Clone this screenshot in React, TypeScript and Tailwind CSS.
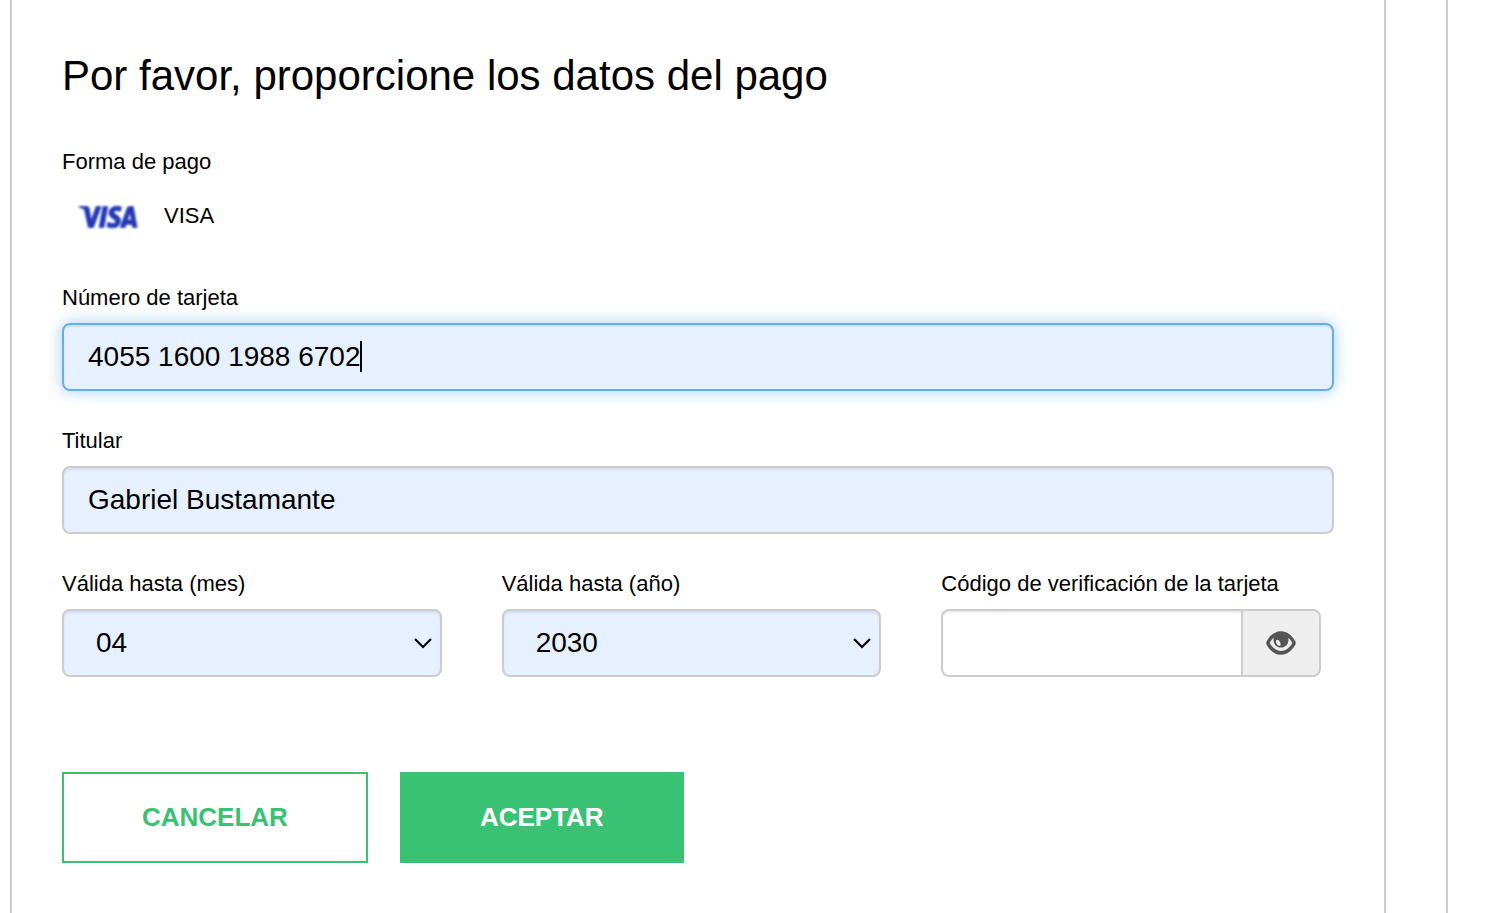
import { useState } from "react";
import type { ReactNode } from "react";
import { SiVisa } from "react-icons/si";

const field =
  "h-[68px] w-full rounded-lg border-2 text-[28px] text-black outline-none appearance-none";
const shade = "border-[#ccc] shadow-[inset_0_2px_2px_rgba(0,0,0,0.075)]";

function Field({ id, label, children }: { id: string; label: string; children: ReactNode }) {
  return (
    <div className="flex flex-col gap-[9px]">
      <label htmlFor={id} className="text-[22px] leading-8">
        {label}
      </label>
      {children}
    </div>
  );
}

function Select({ id, options, initial }: { id: string; options: string[]; initial: string }) {
  return (
    <div className="relative">
      <select id={id} defaultValue={initial} className={`${field} ${shade} bg-[#e6f0ff] px-8`}>
        {options.map((o) => (
          <option key={o}>{o}</option>
        ))}
      </select>
      <svg
        viewBox="0 0 20 12"
        className="pointer-events-none absolute top-7 right-[9px] h-3 w-5"
        fill="none"
        stroke="#000"
        strokeWidth="2.2"
        aria-hidden="true"
      >
        <path d="M2 2 L10 10 L18 2" />
      </svg>
    </div>
  );
}

function Eye() {
  return (
    <svg viewBox="0 0 30 24" className="h-6 w-[30px]" aria-hidden="true">
      <path
        fill="#555"
        d="M15 0.2C21 0.2 26 4.200 29.300 10.200Q30.300 12 29.300 13.800C26 19.800 21 23.800 15 23.800S4 19.800 0.700 13.800Q-0.300 12 0.700 10.200C4 4.200 9 0.200 15 0.200Z"
      />
      <path
        fill="#eee"
        d="M7.700 6.800C6 8.200 4.900 9.800 3.700 12C6.300 16.800 10.200 19.900 15 19.900S23.700 16.800 26.300 12C25.100 9.800 24 8.200 22.300 6.800C23.300 12.400 20 16.600 15 16.600S6.700 12.400 7.700 6.800Z"
      />
      <ellipse cx="12.300" cy="11.800" rx="1.900" ry="3.200" fill="#eee" transform="rotate(-28 12.300 11.800)" />
    </svg>
  );
}

const months = ["01", "02", "03", "04", "05", "06", "07", "08", "09", "10", "11", "12"];
const years = ["2025", "2026", "2027", "2028", "2029", "2030", "2031", "2032"];

export default function App() {
  const [visible, setVisible] = useState(false);
  return (
    <div className="mr-[52px] min-h-screen border-r-2 border-[#ccc] bg-white pr-[60px] pl-2.5 font-['Liberation_Sans',Arial,sans-serif] text-black">
      <main className="min-h-screen border-x-2 border-[#ccc] px-[50px] pt-12 pb-12">
        <h1 className="text-[42px] leading-14">Por favor, proporcione los datos del pago</h1>

        <form onSubmit={(e) => e.preventDefault()}>
          <div className="mt-[42px]">
            <p className="text-[22px] leading-8">Forma de pago</p>
            <div className="mt-2 flex h-[60px] items-center gap-[26px]">
              <SiVisa
                viewBox="-0.4 7.700 24.800 8.600"
                preserveAspectRatio="none"
                stroke="currentColor"
                strokeWidth="0.3"
                className="mt-0.5 ml-4 h-6 w-[60px] text-[#2338b5] blur-[1px]"
                aria-hidden="true"
              />
              <span className="text-[22px] leading-8">VISA</span>
            </div>
          </div>

          <div className="mt-9 flex flex-col gap-[34px]">
            <Field id="number" label="Número de tarjeta">
              <div className="relative">
                <input
                  id="number"
                  defaultValue="4055 1600 1988 6702"
                  className={`${field} border-[#66afe9] bg-[#e6f0ff] px-6 caret-transparent shadow-[inset_0_2px_2px_rgba(0,0,0,0.075),0_0_16px_rgba(102,175,233,0.6)]`}
                />
                <span className="pointer-events-none absolute top-[18px] left-[298px] h-[31px] w-0.5 bg-black" />
              </div>
            </Field>

            <Field id="holder" label="Titular">
              <input
                id="holder"
                defaultValue="Gabriel Bustamante"
                className={`${field} ${shade} bg-[#e6f0ff] px-6`}
              />
            </Field>

            <div className="mr-[13px] grid grid-cols-3 gap-[60px]">
              <Field id="month" label="Válida hasta (mes)">
                <Select id="month" options={months} initial="04" />
              </Field>
              <Field id="year" label="Válida hasta (año)">
                <Select id="year" options={years} initial="2030" />
              </Field>
              <Field id="cvc" label="Código de verificación de la tarjeta">
                <div className="flex">
                  <input
                    id="cvc"
                    type={visible ? "text" : "password"}
                    className={`${field} ${shade} min-w-0 flex-1 rounded-r-none border-r-0 bg-white px-6`}
                  />
                  <button
                    type="button"
                    aria-label="Mostrar código"
                    onClick={() => setVisible(!visible)}
                    className="flex h-[68px] w-20 items-center justify-center rounded-r-lg border-2 border-[#ccc] bg-[#eee]"
                  >
                    <Eye />
                  </button>
                </div>
              </Field>
            </div>
          </div>

          <div className="mt-[95px] flex gap-8">
            <button
              type="button"
              className="border-2 border-[#3ac274] bg-white px-[78px] pt-[23px] pb-6 text-[26px] leading-10 font-bold text-[#3ac274]"
            >
              CANCELAR
            </button>
            <button
              type="submit"
              className="border-2 border-[#3ac274] bg-[#3ac274] px-[78px] pt-[23px] pb-6 text-[26px] leading-10 font-bold text-white"
            >
              ACEPTAR
            </button>
          </div>
        </form>
      </main>
    </div>
  );
}
